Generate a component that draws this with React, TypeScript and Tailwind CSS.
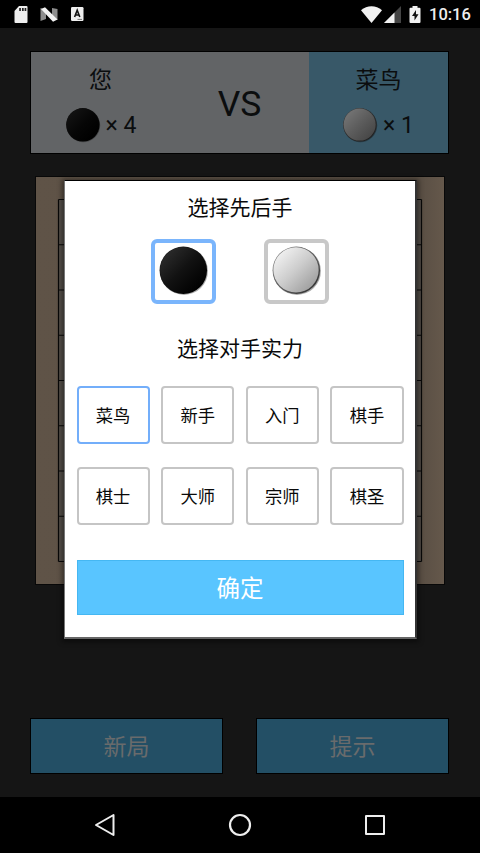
const LEVELS = ['菜鸟', '新手', '入门', '棋手', '棋士', '大师', '宗师', '棋圣'];
const GRID = [0, 1, 2, 3, 4, 5, 6, 7, 8];

type StoneProps = { id: string; stops: [string, string, string]; rim: [string, string]; size: number; shadow: string };

function Stone({ id, stops, rim, size, shadow }: StoneProps) {
  return (
    <svg width={size} height={size} viewBox="0 0 52 52" className="block shrink-0">
      <defs>
        <linearGradient id={id} x1="0.15" y1="0.15" x2="0.85" y2="0.85">
          <stop offset="0" stopColor={stops[0]} />
          <stop offset="0.5" stopColor={stops[1]} />
          <stop offset="1" stopColor={stops[2]} />
        </linearGradient>
        <linearGradient id={id + '-rim'} x1="0.15" y1="0.15" x2="0.85" y2="0.85">
          <stop offset="0" stopColor={rim[0]} />
          <stop offset="1" stopColor={rim[1]} />
        </linearGradient>
      </defs>
      <circle cx="26.5" cy="26.5" r="24.4" fill={shadow} opacity="0.4" />
      <circle cx="25.8" cy="25.8" r="24.2" fill={'url(#' + id + '-rim)'} />
      <circle cx="25.5" cy="25.4" r="23.1" fill={'url(#' + id + ')'} />
    </svg>
  );
}

function StatusBar() {
  return (
    <header className="flex h-[28px] items-center bg-black pl-[14px] pr-[9px]">
      <svg width="14" height="17" viewBox="0 0 14 17">
        <path d="M5 0h7.5q1 0 1 1v15q0 1-1 1h-11q-1 0-1-1V5z" fill="#eee" />
        <path d="M5.2 2h1.7v3H5.2zM8 2h1.7v3H8zM10.6 2h1.7v3h-1.7z" fill="#222" />
      </svg>
      <svg width="18" height="15" viewBox="0 0 18 15" className="ml-[12px]">
        <path d="M.5 1L6 3v9L.5 14zM12 1l5.500 1v11L12 11z" fill="#8d8d8d" />
        <path d="M1 2l4-1.8L17.5 12.5 13 14.8z" fill="#f2f2f2" />
      </svg>
      <svg width="13" height="14" viewBox="0 0 13 14" className="ml-[13px]">
        <rect width="12.5" height="14" rx="1.2" fill="#eee" />
        <path d="M3.6 10L6.2 3.2 8.8 10M4.4 8h3.6" fill="none" stroke="#111" strokeWidth="1.6" />
        <path d="M6.5 12.4h4.5" stroke="#555" strokeWidth=".8" />
      </svg>
      <svg width="21" height="17" viewBox="0 0 21 17" className="ml-auto">
        <path d="M0 4.2C6-1.1 15-1.1 21 4.2L10.5 17z" fill="#f1f1f1" />
      </svg>
      <svg width="17" height="17" viewBox="0 0 17 17" className="ml-[2px]">
        <path d="M17 0v17H0z" fill="#444" />
        <path d="M10.5 6.5V17H0z" fill="#f1f1f1" />
      </svg>
      <svg width="12" height="17" viewBox="0 0 12 17" className="ml-[8px]">
        <path d="M3.5 0h5v1.7h2q1 0 1 1V16q0 1-1 1h-9q-1 0-1-1V2.700q0-1 1-1h2z" fill="#f1f1f1" />
        <path d="M7 4L3 10h2.500v4.500L9.500 8.300H7z" fill="#111" />
      </svg>
      <span className="ml-[8px] w-[42px] whitespace-nowrap pt-[1px] font-[Roboto,sans-serif] text-[16.500px] font-medium leading-[27px] text-[#eee]">10:16</span>
    </header>
  );
}

function ScorePanel() {
  return (
    <section className="ml-[30px] mt-[23px] flex h-[103px] w-[419px] border border-black bg-[#626466] text-[#0b0d0e]">
      <div className="flex w-[139px] flex-col items-center">
        <div className="mt-[13px] h-[32px] text-[23px] leading-[32px]">您</div>
        <div className="mt-[8px] flex items-center gap-[5px]">
          <Stone id="you" size={36} stops={['#111', '#060606', '#000']} rim={['#111', '#000']} shadow="#222" />
          <span className="pt-[3px] text-[23px] leading-[36px]">× 4</span>
        </div>
      </div>
      <div className="flex w-[139px] items-center justify-center pt-[4px] text-[35.500px]">VS</div>
      <div className="flex w-[139px] flex-col items-center bg-[#385868]">
        <div className="mt-[13px] h-[32px] text-[23px] leading-[32px]">菜鸟</div>
        <div className="mt-[8px] flex items-center gap-[5px] pr-[1px]">
          <Stone id="rival" size={36} stops={['#727272', '#5c5c5c', '#484848']} rim={['#3b3b3b', '#202020']} shadow="#111" />
          <span className="pt-[3px] text-[23px] leading-[36px]">× 1</span>
        </div>
      </div>
    </section>
  );
}

function Board() {
  return (
    <svg width="410" height="410" viewBox="0 0 410 410" className="mx-auto mt-[22px] block">
      <defs>
        <linearGradient id="wood" x1="0" x2="1">
          <stop offset="0" stopColor="#5f5347" />
          <stop offset="0.5" stopColor="#5c5146" />
          <stop offset="0.95" stopColor="#5b5045" />
          <stop offset="1" stopColor="#65584b" />
        </linearGradient>
      </defs>
      <rect width="410" height="409" fill="#080808" />
      <rect x="1" y="1" width="408" height="407" fill="url(#wood)" />
      <rect x="23.500" y="23.500" width="363" height="362" fill="#55504a" />
      {GRID.map((n) => (
        <path
          key={n}
          d={`M23.500 ${23.500 + n * 45.250}h363M${23.500 + n * 45.375} 23.500v362`}
          stroke="#080808"
          strokeWidth="1.200"
        />
      ))}
    </svg>
  );
}

function SetupDialog() {
  return (
    <div className="absolute left-[64px] top-[180px] flex h-[459px] w-[353px] flex-col border-b-2 border-l border-r-2 border-t border-b-[#666] border-l-[#777] border-r-[#333] border-t-black bg-white pl-[11.500px] pr-[11.500px] text-[#0a0a0a] shadow-[0_1px_5px_2px_rgba(0,0,0,0.45)]">
      <h2 className="mt-[11px] text-center text-[21px] leading-[32px]">选择先后手</h2>
      <div className="mt-[15px] flex justify-center gap-[48px]">
        <button className="flex size-[65px] items-center justify-center rounded-[6px] border-4 border-[#7ab5fc] pb-[2px] pr-[1px]">
          <Stone id="first" size={51} stops={['#292929', '#111', '#020202']} rim={['#202020', '#000']} shadow="#333" />
        </button>
        <button className="flex size-[65px] items-center justify-center rounded-[6px] border-4 border-[#c8c8c8] pb-[2px] pr-[1px]">
          <Stone id="second" size={51} stops={['#eeeeee', '#cccccc', '#a2a2a2']} rim={['#808080', '#383838']} shadow="#333" />
        </button>
      </div>
      <h2 className="mt-[29px] text-center text-[21px] leading-[32px]">选择对手实力</h2>
      <div className="mt-[20.500px] grid grid-cols-4 gap-x-[11.500px] gap-y-[23px]">
        {LEVELS.map((level, i) => (
          <button
            key={level}
            className={`h-[58px] rounded-[4px] border-2 pt-[2px] text-[17.300px] leading-[52px] ${i === 0 ? 'border-[#73aefa]' : 'border-[#c5c5c5]'}`}
          >
            {level}
          </button>
        ))}
      </div>
      <button className="mt-[35px] h-[55px] border border-[#45b7f2] bg-[#59c5ff] pt-[3px] text-[23.500px] leading-[50px] text-white">确定</button>
    </div>
  );
}

export default function App() {
  return (
    <main className="relative flex h-[853px] w-[480px] flex-col overflow-hidden bg-[#151515] font-[Roboto,'Noto_Sans_CJK_SC',sans-serif]">
      <StatusBar />
      <ScorePanel />
      <Board />
      <div className="mt-[132px] flex gap-[33px] pl-[30px]">
        <button className="h-[56px] w-[193px] border border-black bg-[#234f65] pt-[3px] text-[23px] leading-[52px] text-[#696b6c]">新局</button>
        <button className="h-[56px] w-[193px] border border-black bg-[#234f65] pt-[3px] text-[23px] leading-[52px] text-[#696b6c]">提示</button>
      </div>
      <nav className="mt-auto flex h-[56px] items-center justify-between bg-black px-[93px]">
        <svg width="24" height="24" viewBox="0 0 24 24" fill="none" stroke="#eee" strokeWidth="2" strokeLinejoin="round">
          <path d="M3 12L20.500 2v20z" />
        </svg>
        <svg width="24" height="24" viewBox="0 0 24 24" fill="none" stroke="#eee" strokeWidth="2.200">
          <circle cx="12" cy="12" r="10" />
        </svg>
        <svg width="24" height="24" viewBox="0 0 24 24" fill="none" stroke="#eee" strokeWidth="2" strokeLinejoin="round">
          <rect x="3" y="3" width="18" height="18" />
        </svg>
      </nav>
      <SetupDialog />
    </main>
  );
}
